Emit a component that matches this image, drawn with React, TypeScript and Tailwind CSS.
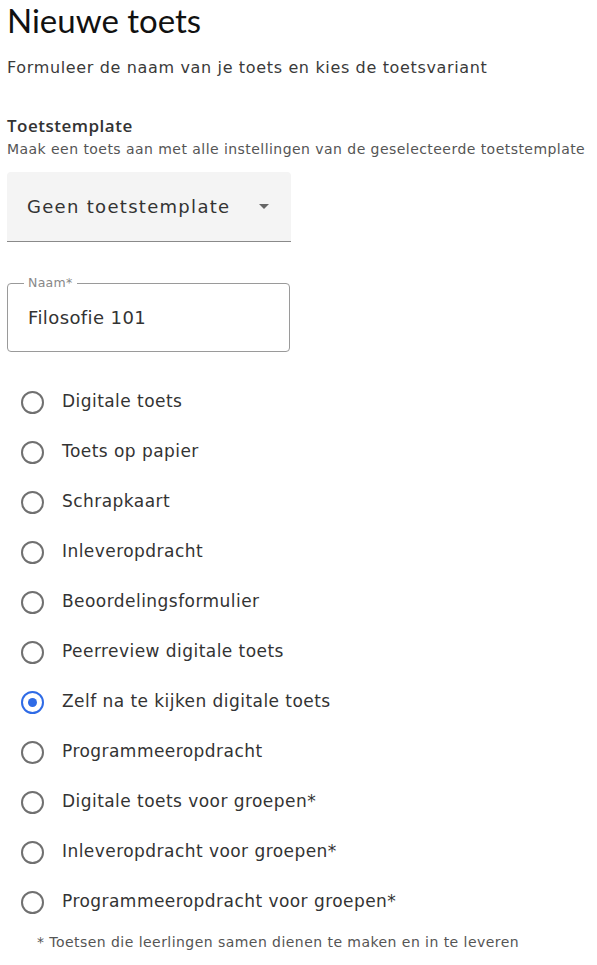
import { useState } from "react";

const options = [
  "Digitale toets",
  "Toets op papier",
  "Schrapkaart",
  "Inleveropdracht",
  "Beoordelingsformulier",
  "Peerreview digitale toets",
  "Zelf na te kijken digitale toets",
  "Programmeeropdracht",
  "Digitale toets voor groepen*",
  "Inleveropdracht voor groepen*",
  "Programmeeropdracht voor groepen*",
];

export default function App() {
  const [selected, setSelected] = useState(6);

  return (
    <div className="min-h-screen bg-white px-[7px] text-[#3a3a3a] font-['DejaVu_Sans',sans-serif]">
      <h1 className="pt-[1px] text-[33px] leading-[38px] text-[#111] font-['Lato',sans-serif]">
        Nieuwe toets
      </h1>
      <p className="mt-[18px] text-[16px] leading-[22px] tracking-[0.65px]">
        Formuleer de naam van je toets en kies de toetsvariant
      </p>

      <div className="mt-[36px]">
        <div className="text-[17px] leading-[22px] font-semibold tracking-[0.5px] text-[#333] font-['Open_Sans',sans-serif]">
          Toetstemplate
        </div>
        <div className="mt-[2px] text-[14px] leading-[20px] tracking-[0.45px] text-[#555]">
          Maak een toets aan met alle instellingen van de geselecteerde toetstemplate
        </div>
      </div>

      {/* select */}
      <div className="mt-[13px] flex h-[70px] w-[284px] items-center justify-between rounded-t-[4px] border-b border-[#8a8a8a] bg-[#f4f4f4] pl-[20px] pr-[22px]">
        <span className="text-[18px] tracking-[1.3px] text-[#333]">Geen toetstemplate</span>
        <span className="h-0 w-0 border-x-[5px] border-t-[5px] border-x-transparent border-t-[#666]" />
      </div>

      {/* naam */}
      <div className="relative mt-[41px] h-[69px] w-[283px] rounded-[4px] border border-[#9a9a9a]">
        <span className="absolute -top-[9px] left-[16px] bg-white px-[4px] text-[12.5px] leading-[16px] tracking-[0.3px] text-[#888]">
          Naam*
        </span>
        <div className="flex h-full items-center pl-[20px] text-[18px] tracking-[0.4px] text-[#333]">
          Filosofie 101
        </div>
      </div>

      {/* radios */}
      <div className="mt-[25px] flex flex-col">
        {options.map((o, i) => (
          <label
            key={o}
            onClick={() => setSelected(i)}
            className="flex h-[50px] cursor-pointer items-center"
          >
            <span className="flex w-[50px] justify-center">
              {i === selected ? (
                <span className="flex h-[23px] w-[23px] items-center justify-center rounded-full border-2 border-[#2f6be6]">
                  <span className="h-[9px] w-[9px] rounded-full bg-[#2f6be6]" />
                </span>
              ) : (
                <span className="h-[23px] w-[23px] rounded-full border-2 border-[#707070]" />
              )}
            </span>
            <span className="ml-[5px] text-[17px] tracking-[0.45px] text-[#333]">{o}</span>
          </label>
        ))}
      </div>

      <p className="mt-[5px] pl-[30px] text-[14px] tracking-[0.45px] text-[#555]">
        * Toetsen die leerlingen samen dienen te maken en in te leveren
      </p>
    </div>
  );
}
